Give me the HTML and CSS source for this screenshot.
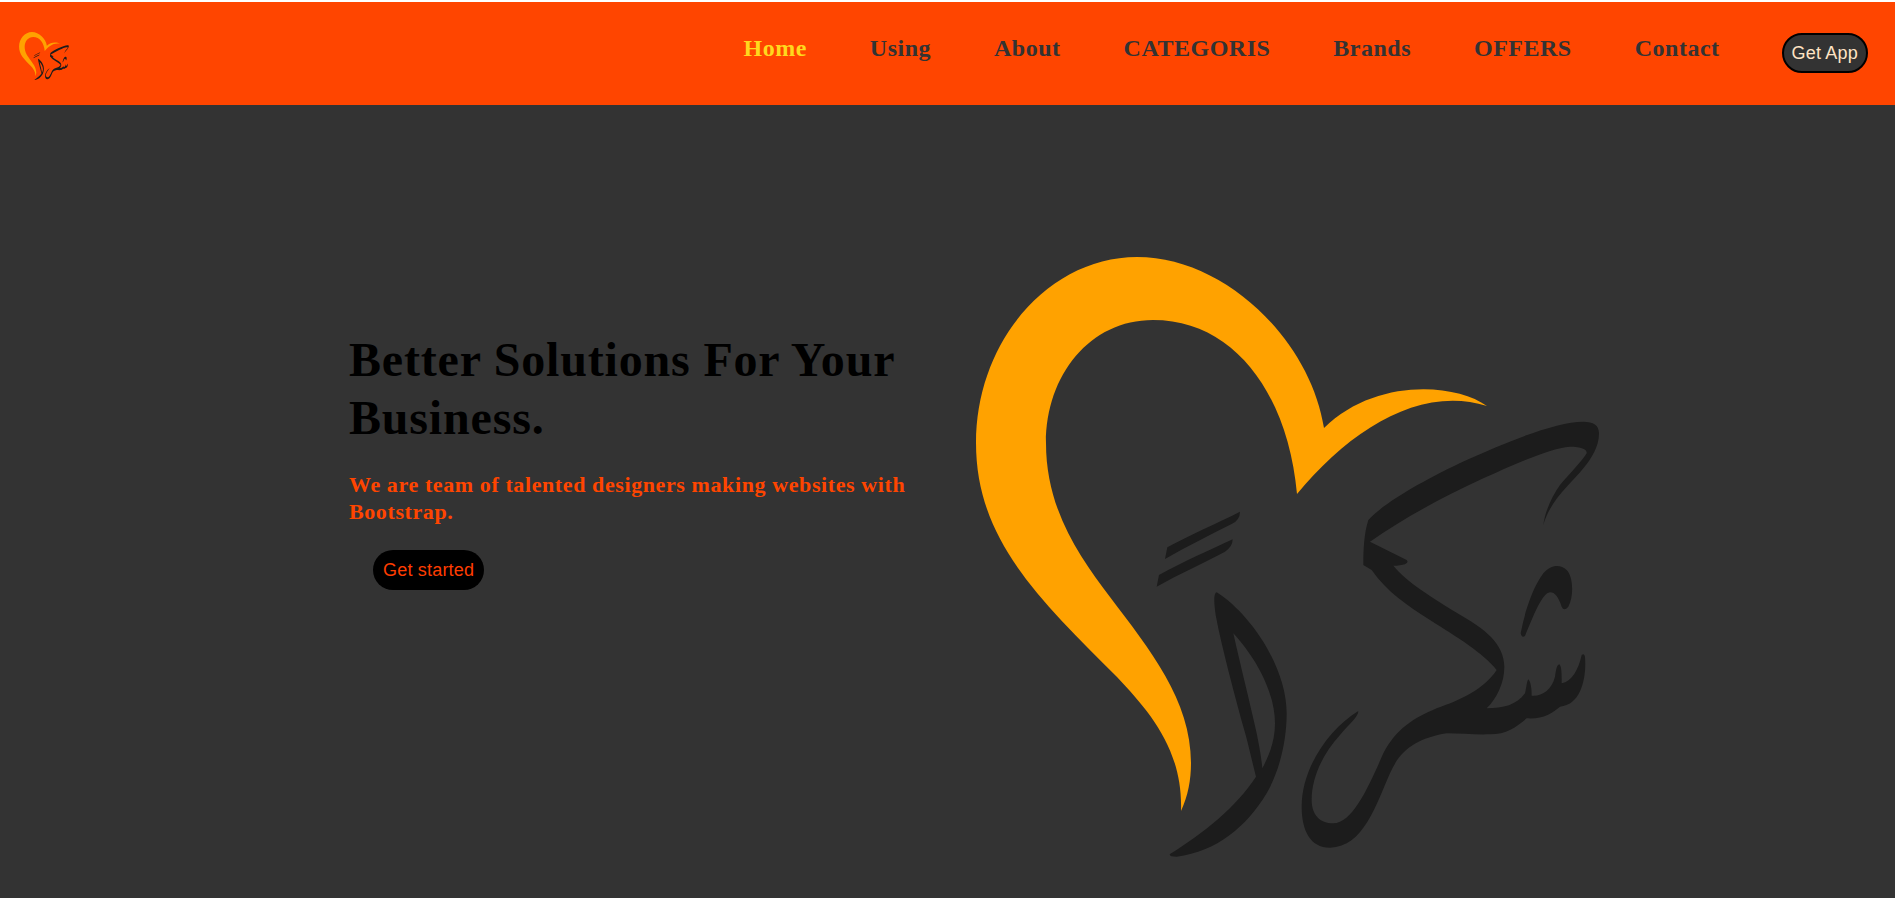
FILE: index.html
```html
<!DOCTYPE html>
<html lang="en">
<head>
<meta charset="utf-8">
<title>Shukran</title>
<link rel="stylesheet" href="styles.css">
</head>
<body>
<svg class="defs" width="0" height="0" aria-hidden="true">
  <defs>
    <symbol id="mark" viewBox="976 257 624 601">
      <path class="mark-heart" d="M1324 428C1310 340 1225 257 1137 257C1050 257 976 340 976 443C976 540 1040 600 1117 677C1150 712 1183 750 1181 811C1188 796 1191 780 1191 763C1191 700 1150 650 1110 597C1080 557 1046 510 1046 443C1046 375 1090 320 1153 320C1235 320 1288 395 1297 494C1350 430 1420 385 1487 406C1455 383 1375 378 1324 428Z"/>
      <g class="mark-ink" transform="translate(950 230) scale(.33333)">
        <path d="M645 987L652 952C720 915 800 880 870 845Q870 870 845 882C780 915 710 950 645 987Z"/>
        <path d="M620 1070L627 1035C700 995 780 960 848 928Q848 950 825 965C760 1000 690 1030 620 1070Z"/>
      </g>
      <g class="mark-ink" transform="translate(950 500) scale(.33333)">
        <path fill-rule="evenodd" d="M800 277C790 280 792 310 797 345C815 440 850 570 880 680C895 730 905 780 918 830C860 920 760 1000 660 1062Q655 1070 680 1070C800 1055 890 980 950 880C990 810 1010 720 1010 640C1010 500 900 340 800 277ZM850 400C870 490 900 610 920 700C930 750 935 780 937 805C960 760 975 720 975 670C975 570 910 465 850 400Z"/>
      </g>
      <g class="mark-ink" transform="translate(1250 400) scale(.33333)">
        <path d="M1000 65C1030 65 1047 75 1047 100C1047 140 1025 175 1000 205C965 250 900 300 880 375C885 335 905 290 930 255C960 220 995 185 1010 160C1012 148 995 140 960 140C900 145 800 190 700 235C580 290 460 355 360 425L470 480Q482 493 440 497L430 497C470 545 540 590 640 650C700 685 763 730 763 800C763 850 740 895 710 925C760 925 800 915 825 880C830 860 830 845 835 838C843 845 845 870 845 887C875 890 905 870 915 830C918 810 920 795 928 793C936 800 935 830 935 850C965 845 985 810 995 765Q1003 758 1005 770C1010 830 995 915 930 920C905 940 880 958 830 955C800 980 770 1003 720 1003C680 1005 630 1000 590 1000C500 1015 450 1050 420 1120C380 1210 340 1343 240 1343C180 1343 155 1290 155 1220C155 1100 240 985 325 933C325 950 300 970 270 1005C220 1060 185 1130 185 1200C185 1245 210 1270 250 1270C310 1270 360 1150 400 1060C440 985 490 955 560 925C630 900 700 870 740 810C700 760 620 710 540 660C470 615 410 575 365 510L340 495C340 450 342 400 355 360C400 310 520 240 650 180C770 125 920 65 1000 65Z"/>
        <path d="M812 700C825 630 850 560 880 520C900 495 930 490 950 510C970 530 972 590 955 620Q942 635 935 620C925 590 915 577 900 577C875 580 850 650 825 708Q815 715 812 700Z"/>
      </g>
    </symbol>
  </defs>
</svg>

<header class="topbar">
  <a class="brand" href="#" aria-label="Home"><svg class="brand-mark"><use href="#mark"/></svg></a>
  <nav class="menu">
    <a class="menu-link is-active" href="#">Home</a>
    <a class="menu-link" href="#">Using</a>
    <a class="menu-link" href="#">About</a>
    <a class="menu-link" href="#">CATEGORIS</a>
    <a class="menu-link" href="#">Brands</a>
    <a class="menu-link" href="#">OFFERS</a>
    <a class="menu-link" href="#">Contact</a>
  </nav>
  <a class="app-btn" href="#">Get App</a>
</header>

<main class="hero">
  <section class="hero-copy">
    <h1 class="hero-title">Better Solutions For Your Business.</h1>
    <p class="hero-lead">We are team of talented designers making websites with Bootstrap.</p>
    <a class="start-btn" href="#">Get started</a>
  </section>
  <svg class="hero-mark"><use href="#mark"/></svg>
</main>
</body>
</html>
```

FILE: styles.css
```css
* { box-sizing: border-box; }

html, body { height: 100%; }

body {
  margin: 0;
  padding-top: 2px;
  background: #fff;
  display: flex;
  flex-direction: column;
  overflow: hidden;
  font-family: "Liberation Serif", "Times New Roman", serif;
}

a { text-decoration: none; }

.defs { position: absolute; }

.mark-heart { fill: #ffa200; }
.mark-ink { fill: #1c1c1c; }

.topbar {
  height: 103px;
  flex: none;
  background: #ff4500;
  display: flex;
  align-items: center;
  padding: 0 27px 1px 19px;
}

.brand { display: flex; margin-top: 6px; margin-right: auto; }
.brand-mark { width: 50px; height: 48px; }

.menu { display: flex; gap: 63px; }

.menu-link {
  padding-bottom: 10px;
  color: #333;
  font-size: 24px;
  font-weight: 700;
  letter-spacing: .5px;
}

.menu-link.is-active { color: #ffd81e; }

.app-btn {
  margin-left: 62px;
  height: 40px;
  padding: 0 8px;
  display: flex;
  align-items: center;
  background: #333;
  border: 2px solid #000;
  border-radius: 20px;
  color: #ffe4c4;
  font: 18px "Liberation Sans", Arial, sans-serif;
  letter-spacing: .2px;
}

.hero {
  flex: 1;
  background: #333;
  display: flex;
  align-items: flex-start;
  padding: 152px 0 0 349px;
}

.hero-copy { width: 627px; padding-top: 74px; }

.hero-title {
  width: 570px;
  margin: 0;
  color: #000;
  font-size: 48px;
  line-height: 58px;
  font-weight: 700;
  letter-spacing: .82px;
}

.hero-lead {
  width: 570px;
  margin: 24px 0 0;
  color: #ff4500;
  font-size: 22px;
  line-height: 27px;
  font-weight: 700;
  letter-spacing: .6px;
}

.start-btn {
  display: inline-block;
  margin: 25px 0 0 24px;
  padding: 0 10px;
  height: 40px;
  background: #000;
  border-radius: 20px;
  color: #ff3d00;
  font: 18px/40px "Liberation Sans", Arial, sans-serif;
  letter-spacing: .2px;
}

.hero-mark { width: 624px; height: 601px; flex: none; }
```
